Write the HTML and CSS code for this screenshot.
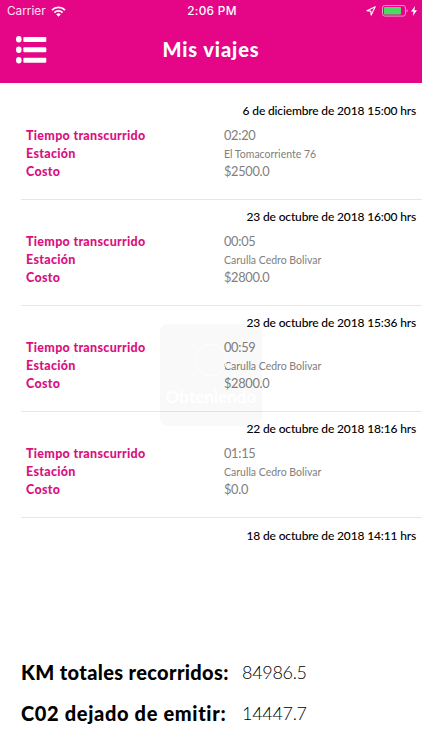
FILE: index.html
```html
<!DOCTYPE html>
<html lang="es">
<head>
  <meta charset="UTF-8" />
  <meta name="viewport" content="width=device-width, initial-scale=1.0"/>
  <title>Mis viajes</title>
  <link rel="stylesheet" href="styles.css">
</head>
<body>

<header class="header">
  <div class="status-bar">
    <div class="status-left">
      <span class="carrier">Carrier</span>
      <svg class="wifi" width="15" height="11" viewBox="0 0 15 11" fill="none" stroke="#fff" stroke-width="1.9">
        <path d="M1 4.1a9.2 9.2 0 0 1 13 0"/>
        <path d="M3.4 6.6a5.8 5.8 0 0 1 8.2 0"/>
        <path d="M5.2 8.3a3.3 3.3 0 0 1 4.6 0L7.5 10.7z" fill="#fff" stroke="none"/>
      </svg>
    </div>
    <span class="clock">2:06 PM</span>
    <div class="status-right">
      <svg width="10" height="10" viewBox="0 0 10 10" fill="none" stroke="#fff" stroke-width="1.1" stroke-linejoin="round">
        <path d="M9.2.8L.9 4.7l3.9.4.4 4z"/>
      </svg>
      <svg class="battery" width="26" height="12" viewBox="0 0 26 12">
        <rect x=".5" y=".5" width="23" height="10.6" rx="2.4" fill="none" stroke="#f292c9"/>
        <rect x="2" y="2" width="17" height="7.6" rx=".8" fill="#4cd964"/>
        <path d="M24.6 4a2 2 0 0 1 0 3.6z" fill="#f292c9"/>
      </svg>
      <svg width="6" height="10" viewBox="0 0 6 10" fill="#fff">
        <path d="M4 0L0 5.6h2.5L1.8 10 6 4.2H3.4z"/>
      </svg>
    </div>
  </div>
  <div class="nav-bar">
    <svg class="menu-icon" width="31" height="28" viewBox="0 0 31 28" fill="#fff">
      <ellipse cx="2.8" cy="3.3" rx="2.8" ry="3.3"/>
      <ellipse cx="2.8" cy="13.8" rx="2.8" ry="3.3"/>
      <ellipse cx="2.8" cy="24.3" rx="2.8" ry="3.3"/>
      <rect x="7.3" y=".9" width="23" height="5" rx="1"/>
      <rect x="7.3" y="11.3" width="23" height="5" rx="1"/>
      <rect x="7.3" y="21.8" width="23" height="5" rx="1"/>
    </svg>
    <h1>Mis viajes</h1>
  </div>
</header>

<main class="trips">
  <section class="trip">
    <div class="date">6 de diciembre de 2018 15:00 hrs</div>
    <div class="row"><span class="label">Tiempo transcurrido</span><span class="value">02:20</span></div>
    <div class="row"><span class="label">Estación</span><span class="value station">El Tomacorriente 76</span></div>
    <div class="row"><span class="label">Costo</span><span class="value">$2500.0</span></div>
  </section>
  <section class="trip">
    <div class="date">23 de octubre de 2018 16:00 hrs</div>
    <div class="row"><span class="label">Tiempo transcurrido</span><span class="value">00:05</span></div>
    <div class="row"><span class="label">Estación</span><span class="value station">Carulla Cedro Bolivar</span></div>
    <div class="row"><span class="label">Costo</span><span class="value">$2800.0</span></div>
  </section>
  <section class="trip">
    <div class="date">23 de octubre de 2018 15:36 hrs</div>
    <div class="row"><span class="label">Tiempo transcurrido</span><span class="value">00:59</span></div>
    <div class="row"><span class="label">Estación</span><span class="value station">Carulla Cedro Bolivar</span></div>
    <div class="row"><span class="label">Costo</span><span class="value">$2800.0</span></div>
  </section>
  <section class="trip">
    <div class="date">22 de octubre de 2018 18:16 hrs</div>
    <div class="row"><span class="label">Tiempo transcurrido</span><span class="value">01:15</span></div>
    <div class="row"><span class="label">Estación</span><span class="value station">Carulla Cedro Bolivar</span></div>
    <div class="row"><span class="label">Costo</span><span class="value">$0.0</span></div>
  </section>
  <section class="trip">
    <div class="date">18 de octubre de 2018 14:11 hrs</div>
  </section>
</main>

<footer class="totals">
  <div class="total"><span class="total-label">KM totales recorridos:</span><span class="total-value">84986.5</span></div>
  <div class="total"><span class="total-label co2">C02 dejado de emitir:</span><span class="total-value">14447.7</span></div>
</footer>

<!-- Loading overlay, fading out -->
<div class="loader">
  <div class="spinner"></div>
  <span>Obteniendo</span>
</div>

</body>
</html>
```
FILE: styles.css
```css
* { box-sizing: border-box; }
body {
  margin: 0;
  height: 750px;
  display: flex;
  flex-direction: column;
  overflow: hidden;
  font-family: Lato, sans-serif;
  background: #fff;
  color: #000;
}

.header {
  height: 82.5px;
  flex: none;
  background: #e40686;
  color: #fff;
}

.status-bar {
  display: grid;
  grid-template-columns: 1fr auto 1fr;
  align-items: center;
  height: 22px;
  padding: 0 5px 0 7px;
  font-family: Inter, sans-serif;
  font-size: 12px;
}

.status-left, .status-right {
  display: flex;
  align-items: center;
}

.carrier {
  font-size: 11.8px;
  color: #ffe3f3;
}

.wifi {
  margin-left: 5px;
}

.clock {
  font-size: 11.8px;
  font-weight: 500;
  letter-spacing: 0.3px;
}

.status-right {
  justify-content: flex-end;
}

.battery {
  margin: 0 3px 0 6px;
}

.nav-bar {
  display: grid;
  grid-template-columns: 47px 1fr 47px;
  align-items: center;
  height: 55px;
  padding-left: 16px;
  padding-right: 16px;
}

h1 {
  margin: 0;
  padding-bottom: 2px;
  text-align: center;
  font-size: 20px;
  font-weight: 900;
  letter-spacing: 0.9px;
}

.trips {
  flex: 1;
  padding-top: 10.75px;
}

.trip {
  height: 106.25px;
  margin-left: 21px;
  padding: 8.25px 6px 0 5px;
  border-bottom: 1px solid #e6e6e6;
}

.trip:last-child {
  border-bottom: none;
}

.date {
  height: 25px;
  line-height: 18px;
  text-align: right;
  font-size: 12px;
  font-weight: 500;
  letter-spacing: -0.15px;
}

.row {
  display: grid;
  grid-template-columns: 198px 1fr;
  height: 18px;
  line-height: 18px;
}

.label {
  font-size: 12.5px;
  font-weight: 900;
  letter-spacing: 0.3px;
  color: #d9117f;
}

.value {
  font-size: 12.8px;
  line-height: 17px;
  letter-spacing: -0.3px;
  color: #808080;
}

.station {
  font-size: 10.5px;
  line-height: 19px;
  letter-spacing: 0;
}

.totals {
  flex: none;
  height: 98px;
  padding-left: 21px;
}

.total {
  display: grid;
  grid-template-columns: 221px 1fr;
  height: 41px;
  line-height: 41px;
}

.total-label {
  font-size: 20px;
  font-weight: 900;
  letter-spacing: 0.35px;
}

.co2 {
  letter-spacing: 0.65px;
}

.total-value {
  font-size: 18px;
  font-weight: 300;
  letter-spacing: -0.3px;
}

.loader {
  position: absolute;
  top: 324px;
  left: 160px;
  width: 102px;
  height: 102px;
  padding-top: 20px;
  display: flex;
  flex-direction: column;
  align-items: center;
  border-radius: 8px;
  background: rgba(0, 0, 0, 0.022);
  color: #fff;
  font-size: 17px;
  font-weight: 700;
}

.spinner {
  width: 32px;
  height: 32px;
  margin-bottom: 10px;
  border: 1px solid #fff;
  border-radius: 50%;
}
```
